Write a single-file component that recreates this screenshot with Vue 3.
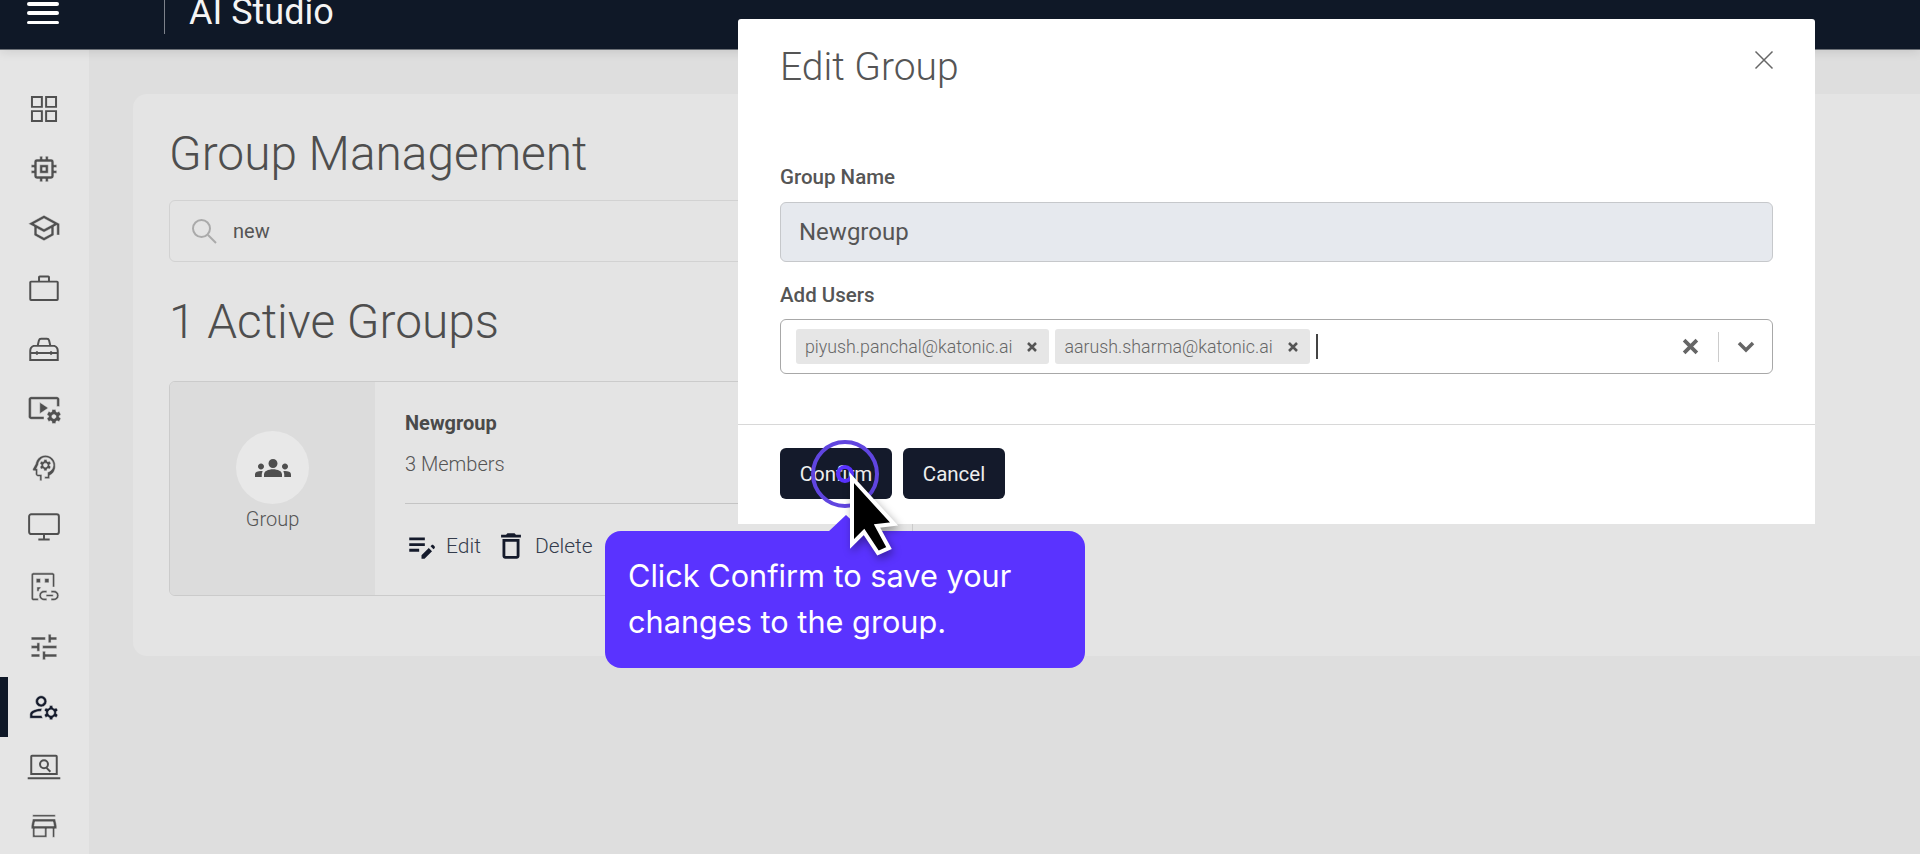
<script setup>
const navIcons = [
  { id: 'grid', line: true, d: 'M3.500 3.500h7v7h-7zM13.500 3.500h7v7h-7zM3.500 13.500h7v7h-7zM13.500 13.500h7v7h-7z' },
  { id: 'chip', d: 'M15 9H9v6h6V9zm-2 4h-2v-2h2v2zm8-2V9h-2V7c0-1.1-.9-2-2-2h-2V3h-2v2h-2V3H9v2H7c-1.1 0-2 .9-2 2v2H3v2h2v2H3v2h2v2c0 1.1.9 2 2 2h2v2h2v-2h2v2h2v-2h2c1.1 0 2-.9 2-2v-2h2v-2h-2v-2h2zm-4 6H7V7h10v10z' },
  { id: 'school', d: 'M12 3L1 9l4 2.18v6L12 21l7-3.82v-6l2-1.09V17h2V9L12 3zm6.82 6L12 12.72 5.18 9 12 5.28 18.82 9zM17 15.99l-5 2.73-5-2.73v-3.72L12 15l5-2.73v3.72z' },
  { id: 'work', line: true, d: 'M2.800 7.500h18.400c.3 0 .5.2.5.5v12c0 .3-.2.500-.5.500H2.800c-.3 0-.5-.2-.5-.5V8c0-.3.2-.5.5-.5zM8.500 7.500V4.300c0-.3.2-.5.5-.5h6c.3 0 .5.2.5.5v3.200' },
  { id: 'toolbox', line: true, d: 'M2.300 20.500V14c0-1.600 1-3 2.400-3.500h14.600c1.400.5 2.400 1.900 2.400 3.500v6.500zM7.500 10.500l.9-3.800c.2-.7.7-1.200 1.500-1.200h4.200c.8 0 1.300.5 1.500 1.200l.9 3.800M2.300 15.500h19.400M7 14.300v2.400M17 14.300v2.400' },
  { id: 'video', d: 'M3 6h18v5h2V6c0-1.1-.9-2-2-2H3c-1.1 0-2 .9-2 2v12c0 1.1.9 2 2 2h9v-2H3V6z M15 12l-6-4v8z M22.71 18.43c.03-.29.04-.58.01-.86l1.07-.85c.1-.08.12-.21.06-.32l-1.03-1.79c-.06-.11-.19-.15-.31-.11L21.23 15c-.23-.17-.48-.31-.75-.42l-.2-1.36c-.02-.13-.12-.22-.25-.22h-2.07c-.12 0-.23.09-.25.21l-.2 1.36c-.26.11-.51.26-.74.42l-1.28-.5c-.12-.05-.25 0-.31.11l-1.03 1.79c-.06.11-.04.24.06.32l1.07.86c-.03.29-.04.58-.01.86l-1.07.85c-.1.08-.12.21-.06.32l1.03 1.79c.06.11.19.15.31.11l1.27-.5c.23.17.48.31.75.42l.2 1.36c.02.12.12.21.25.21h2.07c.12 0 .23-.09.25-.21l.2-1.36c.26-.11.51-.26.74-.42l1.28.5c.12.05.25 0 .31-.11l1.03-1.79c.06-.11.04-.24-.06-.32l-1.06-.85zM19 19.5c-.83 0-1.5-.67-1.5-1.5s.67-1.5 1.5-1.5 1.5.67 1.5 1.5-.67 1.5-1.5 1.5z' },
  { id: 'psych', d: 'M19.940 9.060C19.500 5.730 16.570 3 13 3 9.470 3 6.570 5.610 6.080 9l-1.930 3.480c-.41.66.07 1.520.85 1.520h1v2c0 1.100.9 2 2 2h1v3h1.500v-4.500H7.500V12.500H6.700l1.330-2.830C8.210 7.060 10.350 4.500 13 4.500c3.040 0 5.500 2.460 5.500 5.500 0 2.090-1.290 3.880-3.110 4.630l-.89.420V18h-2v1.500h3.500v-2.180c2.620-1.250 4.350-4.080 3.940-7.260z M16 10c0-.14-.01-.27-.04-.39l.85-.66c.08-.06.1-.17.05-.26l-.8-1.380c-.04-.09-.15-.12-.24-.09l-1 .4c-.21-.16-.43-.29-.67-.39L14 6.170c-.02-.1-.1-.17-.2-.17h-1.600c-.1 0-.18.07-.2.17l-.15 1.060c-.24.1-.47.24-.67.39l-1-.4c-.09-.03-.19 0-.24.09l-.8 1.380c-.05.1-.03.2.05.26l.85.66c-.02.12-.04.26-.04.39s.01.26.02.39l-.84.66c-.08.06-.1.17-.05.25l.8 1.390c.05.09.16.12.25.09l.99-.4c.21.16.43.29.68.39l.15 1.060c.02.1.1.17.2.17h1.600c.1 0 .19-.07.2-.17l.15-1.060c.24-.1.46-.23.67-.39l.99.4c.08.03.19 0 .24-.09l.8-1.390c.05-.09.03-.19-.05-.25l-.83-.66c.01-.13.02-.26.02-.39zm-3 1.430c-.79 0-1.430-.64-1.430-1.430s.64-1.430 1.430-1.430 1.430.64 1.430 1.430-.64 1.430-1.430 1.430z' },
  { id: 'desktop', line: true, d: 'M3 3h18c.8 0 1.500.7 1.500 1.500v11c0 .8-.7 1.500-1.500 1.500H3c-.8 0-1.500-.7-1.500-1.500v-11C1.500 3.700 2.200 3 3 3zM12 17v3.500M8 20.800h8' },
  { id: 'linkapp', d: 'M4.500 2h13.500c.8 0 1.500.7 1.500 1.500V12H18V3.500H4.500V20H8v1.500H4.500c-.8 0-1.500-.7-1.500-1.500V3.500C3 2.700 3.700 2 4.500 2z M6.500 6h3v3h-3V6zm6 0h3v3h-3V6z M7 12h3l-1 1.500H8.500V15H7v-3z M14 14.500h-2a3.500 3.500 0 0 0 0 7h2V20h-2a2 2 0 0 1 0-4h2v-1.500zm5 0h-2V16h2a2 2 0 0 1 0 4h-2v1.500h2a3.500 3.500 0 0 0 0-7zm-5.500 2.750h5v1.500h-5z' },
  { id: 'tune', d: 'M3 17v2h6v-2H3zM3 5v2h10V5H3zm10 16v-2h8v-2h-8v-2h-2v6h2zM7 9v2H3v2h4v2h2V9H7zm14 4v-2H11v2h10zm-6-4h2V7h4V5h-4V3h-2v6z' },
  { id: 'manage', active: true, d: 'M4 18v-.65c0-.34.16-.66.41-.81C6.100 15.530 8.030 15 10 15c.03 0 .05 0 .08.01.1-.7.3-1.370.59-1.980-.22-.02-.44-.03-.67-.03-2.420 0-4.680.67-6.610 1.820-.88.52-1.390 1.500-1.390 2.530V20h9.260c-.42-.6-.75-1.280-.97-2H4z M10 12c2.210 0 4-1.790 4-4s-1.790-4-4-4-4 1.790-4 4 1.790 4 4 4zm0-6c1.100 0 2 .9 2 2s-.9 2-2 2-2-.9-2-2 .9-2 2-2z M20.750 16c0-.22-.03-.42-.06-.63l1.140-1.010-1-1.730-1.450.49c-.32-.27-.68-.48-1.080-.63L18 11h-2l-.3 1.490c-.4.15-.76.36-1.080.63l-1.450-.49-1 1.730 1.140 1.010c-.03.21-.06.41-.06.63s.03.42.06.63l-1.140 1.010 1 1.730 1.450-.49c.32.27.68.48 1.080.63L16 21h2l.3-1.490c.4-.15.76-.36 1.080-.63l1.450.49 1-1.730-1.140-1.010c.03-.21.06-.41.06-.63zM17 18c-1.100 0-2-.9-2-2s.9-2 2-2 2 .9 2 2-.9 2-2 2z' },
  { id: 'screen', line: true, d: 'M3.500 4h17c.3 0 .5.2.5.5V17H3V4.500c0-.3.2-.5.5-.5zM.5 20h23M12 7.300a2.800 2.800 0 1 0 0 5.600 2.800 2.800 0 0 0 0-5.600zM14 12.800l2.500 2.500' },
  { id: 'store', d: 'M18.360 9l.6 3H5.040l.6-3h12.720M20 4H4v1.500h16V4zm0 3H4l-1 5v2h1v6h10v-6h4v6h1.500v-6H21v-2l-1-5zM5.500 18.500V14H12.500v4.500H5.500z' }
]
</script>

<template>
  <div class="page">
    <header class="topbar">
      <button class="burger" aria-label="Menu"><span></span><span></span><span></span></button>
      <span class="brand-rule"></span>
      <span class="brand">AI Studio</span>
    </header>

    <div class="body">
      <nav class="sidebar">
        <div v-for="n in navIcons" :key="n.id" class="nav-item" :class="{ active: n.active }">
          <svg class="nav-icon" :class="{ line: n.line }" viewBox="0 0 24 24"><path :d="n.d" /></svg>
        </div>
      </nav>

      <main class="main">
        <section class="card">
          <h1 class="title">Group Management</h1>
          <div class="search">
            <svg class="search-icon" viewBox="0 0 26 26" fill="none"><circle cx="10.500" cy="10.500" r="8.500" /><path d="M17 17l8 8" /></svg>
            <span>new</span>
          </div>
          <h2 class="subtitle">1 Active Groups</h2>
          <article class="group">
            <div class="group-side">
              <div class="avatar">
                <svg viewBox="0 0 24 24"><path d="M4 13c1.100 0 2-.9 2-2s-.9-2-2-2-2 .9-2 2 .9 2 2 2zm1.130 1.100c-.37-.06-.74-.1-1.130-.1-.99 0-1.930.21-2.780.58C.48 14.900 0 15.620 0 16.430V18h4.500v-1.610c0-.83.23-1.610.63-2.290zM20 13c1.100 0 2-.9 2-2s-.9-2-2-2-2 .9-2 2 .9 2 2 2zm4 3.430c0-.81-.48-1.530-1.220-1.850-.85-.37-1.790-.58-2.780-.58-.39 0-.76.04-1.130.1.4.68.63 1.460.63 2.290V18H24v-1.570zm-7.760-2.650c-1.170-.52-2.610-.9-4.240-.9-1.630 0-3.070.39-4.240.9C6.680 14.130 6 15.210 6 16.390V18h12v-1.610c0-1.180-.68-2.260-1.760-2.610zM12 12c1.660 0 3-1.340 3-3s-1.340-3-3-3-3 1.340-3 3 1.340 3 3 3z" /></svg>
              </div>
              <span class="group-label">Group</span>
            </div>
            <div class="group-main">
              <div class="group-name">Newgroup</div>
              <div class="group-count">3 Members</div>
              <div class="group-rule"></div>
              <div class="group-actions">
                <span class="action">
                  <svg viewBox="0 0 24 24"><path d="M3 10h11v2H3v-2zm0-4h11v2H3V6zm0 8h7v2H3v-2zm15.010-1.870l.71-.71c.39-.39 1.020-.39 1.410 0l.71.71c.39.39.39 1.020 0 1.410l-.71.71-2.120-2.120zm-1.060 1.060l-5.300 5.300V21h2.120l5.300-5.300-2.120-2.120z" /></svg>
                  Edit
                </span>
                <span class="action">
                  <svg viewBox="0 0 24 24"><path d="M6 19c0 1.100.9 2 2 2h8c1.100 0 2-.9 2-2V7H6v12zM8 9h8v10H8V9zm7.500-5l-1-1h-5l-1 1H5v2h14V4h-3.500z" /></svg>
                  Delete
                </span>
              </div>
            </div>
          </article>
        </section>
      </main>
    </div>

    <div class="modal">
      <div class="modal-head">
        <span class="modal-title">Edit Group</span>
        <svg class="modal-close" viewBox="0 0 20 20" fill="none"><path d="M1.500 1.500l17 17M18.500 1.500l-17 17" /></svg>
      </div>
      <div class="modal-body">
        <label class="field-label">Group Name</label>
        <div class="name-input">Newgroup</div>
        <label class="field-label users-label">Add Users</label>
        <div class="select">
          <div class="chips">
            <span class="chip">piyush.panchal@katonic.ai<svg viewBox="0 0 12 12"><path d="M2 2l8 8M10 2l-8 8" /></svg></span>
            <span class="chip">aarush.sharma@katonic.ai<svg viewBox="0 0 12 12"><path d="M2 2l8 8M10 2l-8 8" /></svg></span>
            <span class="caret"></span>
          </div>
          <div class="select-tools">
            <svg class="tool-x" viewBox="0 0 16 16"><path d="M2 2l12 12M14 2L2 14" /></svg>
            <span class="tool-rule"></span>
            <svg class="tool-chev" viewBox="0 0 18 12"><path d="M2 2l7 7 7-7" /></svg>
          </div>
        </div>
      </div>
      <div class="modal-foot">
        <button class="btn confirm">Confirm</button>
        <button class="btn cancel">Cancel</button>
      </div>
    </div>

    <div class="tooltip">
      <span class="tip-arrow"></span>
      Click Confirm to save your<br />changes to the group.
    </div>

    <div class="click-ring"><span></span></div>

    <svg class="pointer" viewBox="0 0 60 92">
      <path d="M6 6L48 52 31 54 43 76 32 81 18 60 6 72z" fill="#000" stroke="#fff" stroke-width="4" stroke-linejoin="miter" />
    </svg>
  </div>
</template>

<style>
html, body { margin: 0; height: 854px; overflow: hidden; }
</style>

<style scoped>
.page {
  position: relative;
  width: 1920px;
  height: 854px;
  overflow: hidden;
  background: #dedede;
  font-family: Roboto, "Liberation Sans", sans-serif;
  display: flex;
  flex-direction: column;
}
.topbar {
  flex: none;
  height: 49px;
  background: #0f1827;
  border-bottom: 1px solid #6b6f76;
  display: flex;
  align-items: flex-start;
  box-shadow: 0 2px 10px rgba(0, 0, 0, .1);
  position: relative;
  z-index: 1;
}
.burger {
  margin: 2px 0 0 27px;
  padding: 0;
  width: 32px;
  height: 22px;
  background: none;
  border: 0;
  display: flex;
  flex-direction: column;
  justify-content: space-between;
}
.burger span { display: block; height: 3.500px; border-radius: 2px; background: #fff; }
.brand-rule { margin-left: 105px; width: 1px; height: 34px; background: #7d828b; }
.brand {
  margin: -7px 0 0 24px;
  font-size: 36px;
  line-height: 38px;
  color: #f4f4f4;
}
.body { flex: 1; display: flex; min-height: 0; }
.sidebar {
  flex: none;
  width: 89px;
  padding-top: 29px;
  background: #e5e5e5;
}
.nav-item {
  position: relative;
  height: 59.800px;
  box-sizing: border-box;
  padding-right: 2px;
  display: flex;
  align-items: center;
  justify-content: center;
}
.nav-item.active::before {
  content: "";
  position: absolute;
  left: 0;
  top: 0;
  width: 8px;
  height: 60px;
  background: #0f1827;
}
.nav-icon { width: 34px; height: 34px; fill: #505050; stroke: #e5e5e5; stroke-width: .35px; }
.nav-icon.line { fill: none; stroke: #505050; stroke-width: 1.400px; }
.active .nav-icon { fill: #141a2b; }
.main { flex: 1; padding: 44px 0 0 44px; min-width: 0; }
.card {
  height: 562px;
  padding: 0 0 0 36px;
  background: #e4e4e4;
  border-radius: 14px 0 0 14px;
  overflow: hidden;
}
.title {
  margin: 29px 0 0;
  font-size: 47.800px;
  line-height: 62px;
  font-weight: 300;
  color: #4e4e4e;
}
.search {
  margin-top: 15px;
  width: 1100px;
  height: 62px;
  box-sizing: border-box;
  padding-left: 21px;
  border: 1px solid #d2d2d2;
  border-radius: 6px;
  display: flex;
  align-items: center;
  gap: 16px;
  font-size: 20px;
  color: #555;
}
.search-icon { width: 26px; height: 26px; stroke: #aaa; stroke-width: 2; }
.subtitle {
  margin: 29px 0 0;
  font-size: 47.800px;
  line-height: 62px;
  font-weight: 300;
  color: #4e4e4e;
}
.group {
  margin-top: 28px;
  width: 744px;
  height: 215px;
  box-sizing: border-box;
  border: 1px solid #cbcbcb;
  border-radius: 6px;
  display: flex;
  overflow: hidden;
}
.group-side {
  flex: none;
  width: 205px;
  background: #dcdcdc;
  display: flex;
  flex-direction: column;
  align-items: center;
  padding-top: 49px;
  box-sizing: border-box;
}
.avatar {
  width: 73px;
  height: 73px;
  border-radius: 50%;
  background: #e8e8e8;
  display: flex;
  align-items: center;
  justify-content: center;
}
.avatar svg { width: 36px; height: 36px; fill: #4f4f4f; }
.group-label { margin-top: 2px; font-size: 20px; line-height: 26px; font-weight: 300; color: #555; }
.group-main { flex: 1; padding: 28px 0 0 30px; }
.group-name { font-size: 20px; line-height: 26px; font-weight: 700; color: #4a4a4a; }
.group-count { margin-top: 15px; font-size: 20px; line-height: 26px; font-weight: 300; color: #555; }
.group-rule { margin-top: 26px; height: 1px; background: #c4c4c4; }
.group-actions { margin-top: 25px; display: flex; gap: 13px; }
.action {
  display: flex;
  align-items: center;
  gap: 7px;
  font-size: 21px;
  line-height: 34px;
  font-weight: 300;
  color: #343c4c;
}
.action svg { width: 34px; height: 34px; fill: #141a2b; }
.modal {
  position: absolute;
  left: 738px;
  top: 19px;
  width: 1077px;
  height: 505px;
  background: #fff;
  border-radius: 3px 3px 0 0;
  z-index: 2;
  display: flex;
  flex-direction: column;
}
.modal-head {
  flex: none;
  height: 93px;
  padding: 0 42px;
  display: flex;
  justify-content: space-between;
  align-items: flex-start;
}
.modal-title {
  margin-top: 25px;
  font-size: 39px;
  line-height: 46px;
  font-weight: 300;
  color: #555;
}
.modal-close { width: 20px; height: 20px; margin-top: 31px; margin-right: -1px; stroke: #666; stroke-width: 1.500; }
.modal-body { flex: 1; padding: 0 42px; }
.field-label { display: block; font-size: 20.500px; line-height: 24px; font-weight: 500; color: #555; }
.modal-body .field-label:first-child { margin-top: 53px; }
.modal-body .users-label { margin-top: 21px; }
.name-input {
  margin-top: 13px;
  height: 60px;
  box-sizing: border-box;
  padding-left: 18px;
  display: flex;
  align-items: center;
  background: #e6e9ee;
  border: 1px solid #c6c8cb;
  border-radius: 6px;
  font-size: 24px;
  color: #555;
}
.select {
  margin-top: 12px;
  height: 55px;
  box-sizing: border-box;
  border: 1px solid #a8a8a8;
  border-radius: 6px;
  display: flex;
  align-items: center;
  justify-content: space-between;
  padding: 0 17px 0 15px;
}
.chips { display: flex; align-items: center; gap: 6px; }
.chip {
  height: 35px;
  box-sizing: border-box;
  padding: 0 11px 0 9px;
  display: flex;
  align-items: center;
  gap: 14px;
  background: #e6e6e6;
  border-radius: 3px;
  font-size: 17.800px;
  font-weight: 300;
  color: #666;
}
.chip svg { width: 12px; height: 12px; stroke: #555; stroke-width: 2.500; fill: none; }
.caret { width: 2px; height: 25px; background: #444; }
.select-tools { display: flex; align-items: center; }
.tool-x { width: 17px; height: 17px; stroke: #666; stroke-width: 3.500; fill: none; }
.tool-rule { width: 1px; height: 30px; margin: 0 18px 0 19px; background: #ccc; }
.tool-chev { width: 18px; height: 12px; stroke: #666; stroke-width: 3.500; fill: none; }
.modal-foot {
  flex: none;
  height: 100px;
  box-sizing: border-box;
  border-top: 1px solid #d8d8d8;
  padding: 23px 0 0 42px;
  display: flex;
  align-items: flex-start;
  gap: 11px;
}
.btn {
  height: 51px;
  border: 0;
  border-radius: 6px;
  background: #141a2b;
  color: #eee;
  font-family: inherit;
  font-size: 20.500px;
  font-weight: 400;
  padding: 0;
}
.confirm { width: 112px; }
.cancel { width: 102px; }
.tooltip {
  position: absolute;
  left: 605px;
  top: 531px;
  width: 480px;
  height: 137px;
  box-sizing: border-box;
  padding: 22px 23px 0;
  background: #5a33ff;
  border-radius: 16px;
  z-index: 3;
  font-family: Inter, sans-serif;
  font-size: 30.700px;
  line-height: 46px;
  color: #fff;
}
.tip-arrow {
  position: absolute;
  left: 223px;
  top: -16px;
  border-left: 18px solid transparent;
  border-right: 18px solid transparent;
  border-bottom: 17px solid #5a33ff;
}
.click-ring {
  position: absolute;
  left: 811px;
  top: 440px;
  width: 68px;
  height: 68px;
  box-sizing: border-box;
  border: 4px solid #6045e0;
  border-radius: 50%;
  z-index: 4;
  display: flex;
  align-items: center;
  justify-content: center;
}
.click-ring span {
  width: 18px;
  height: 18px;
  box-sizing: border-box;
  border: 4px solid #5a33ff;
  border-radius: 50%;
}
.pointer {
  position: absolute;
  left: 846px;
  top: 472px;
  width: 60px;
  height: 92px;
  z-index: 5;
  filter: drop-shadow(2px 4px 4px rgba(0, 0, 0, .35));
}
</style>
